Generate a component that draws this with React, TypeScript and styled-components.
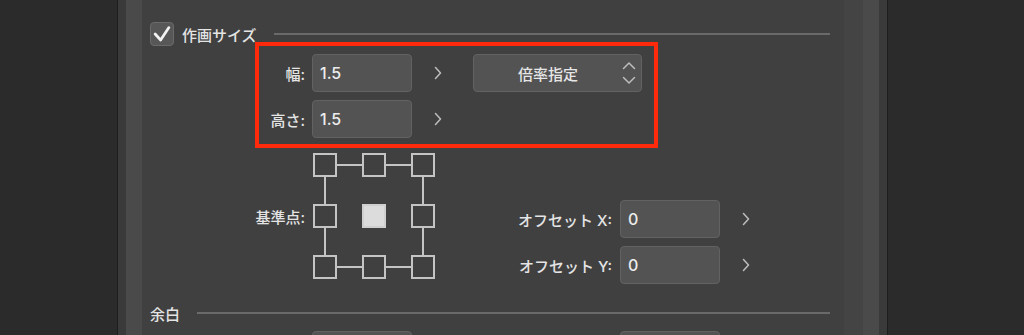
import * as React from 'react'
import styled, { createGlobalStyle } from 'styled-components'

interface ILabelProps {
	$w: number
	$gap?: number
}

interface IHeaderProps {
	$top: number
}

const GlobalStyle = createGlobalStyle`
	html, body {
		margin: 0;
		padding: 0;
		background: #2b2b2b;
	}
	body {
		font-family: "Inter", "Noto Sans CJK JP", sans-serif;
	}
`

const Screen = styled.div`
	display: flex;
	height: 335px;
	overflow: hidden;
	background: #2b2b2b;
`

const Backdrop = styled.div`
	width: 117px;
	flex: none;
`

const Frame = styled.div`
	display: flex;
	flex: none;
	width: 771px;
	box-sizing: border-box;
	border-left: 1px solid #1d1d1d;
	border-right: 1px solid #1d1d1d;
	padding: 0 8px;
	background: #3a3a3a;
`

const Rail = styled.div`
	width: 16px;
	flex: none;
	background: #4a4a4a;
`

const Gutter = styled.div`
	width: 19px;
	flex: none;
	background: #444444;
`

const Panel = styled.div`
	flex: 1;
	min-width: 0;
	background: #404040;
	padding: 0 14px 0 8px;
	color: #e4e4e4;
	font-size: 15px;
	font-weight: 500;
`

const SectionHeader = styled.div`
	display: flex;
	align-items: center;
	height: 24px;
	margin-top: ${(p: IHeaderProps) => p.$top}px;
`

const CheckBox = styled.span`
	display: flex;
	align-items: center;
	justify-content: center;
	width: 24px;
	height: 24px;
	box-sizing: border-box;
	border: 1px solid #6a6a6a;
	border-radius: 4px;
	background: #575757;
	margin-right: 8px;
`

const SectionTitle = styled.span`
	white-space: nowrap;
`

const Rule = styled.div`
	flex: 1;
	height: 2px;
	margin-left: 17px;
	background: #6a6a6a;
`

const Highlight = styled.div`
	display: grid;
	gap: 8px;
	width: 403px;
	box-sizing: border-box;
	margin: -4px 0 0 105px;
	padding: 8px 0 6px;
	border: 4px solid #ff2a0c;
`

const FieldRow = styled.div`
	display: flex;
	align-items: center;
	height: 38px;
`

const FieldLabel = styled.span`
	flex: none;
	width: ${(p: ILabelProps) => p.$w}px;
	margin-right: ${(p: ILabelProps) => p.$gap ?? 7}px;
	text-align: right;
	white-space: nowrap;
`

const NumberField = styled.input`
	flex: none;
	width: 100px;
	height: 38px;
	box-sizing: border-box;
	margin: 0;
	padding: 0 7px;
	border: 1px solid #626262;
	border-radius: 4px;
	background: #535353;
	color: #ececec;
	font-family: inherit;
	font-size: 16px;
	font-weight: 500;
	outline: none;
`

const StepCell = styled.span`
	display: flex;
	align-items: center;
	flex: none;
	width: 61px;
	height: 38px;
	box-sizing: border-box;
	padding-left: 22px;
`

const Select = styled.div`
	display: flex;
	align-items: center;
	width: 169px;
	height: 38px;
	box-sizing: border-box;
	padding-right: 5px;
	border: 1px solid #626262;
	border-radius: 4px;
	background: #535353;
	color: #e6e6e6;
`

const SelectText = styled.span`
	flex: 1;
	text-align: center;
`

const AnchorRow = styled.div`
	display: flex;
	align-items: flex-start;
	margin-top: 5px;
`

const AnchorBlock = styled.div`
	display: flex;
	align-items: center;
`

const Offsets = styled.div`
	display: grid;
	gap: 8px;
	margin-left: 65px;
	padding-top: 47px;
`

const Chevron = () => (
	<svg width="8" height="14" viewBox="0 0 8 14">
		<path d="M1.5 1.5 L6.5 7 L1.5 12.5" fill="none" stroke="#bdbdbd" strokeWidth="1.5" strokeLinecap="round" strokeLinejoin="round" />
	</svg>
)

const UpDown = () => (
	<svg width="14" height="24" viewBox="0 0 14 24">
		<path d="M1.5 7.5 L7 2 L12.5 7.5" fill="none" stroke="#bdbdbd" strokeWidth="1.5" strokeLinecap="round" strokeLinejoin="round" />
		<path d="M1.5 16.5 L7 22 L12.5 16.5" fill="none" stroke="#bdbdbd" strokeWidth="1.5" strokeLinecap="round" strokeLinejoin="round" />
	</svg>
)

const Check = () => (
	<svg width="24" height="24" viewBox="0 0 24 24">
		<path d="M4.5 12 L10.5 18.5 L19.5 5" fill="none" stroke="#f2f2f2" strokeWidth="3" strokeLinecap="round" strokeLinejoin="round" />
	</svg>
)

// 3x3 anchor picker, centre selected
const AnchorGrid = () => {
	const cols = [0, 49, 98]
	const rows = [0, 51, 102]
	const line = '#c4c4c4'

	return (
		<svg width="122" height="126" viewBox="0 0 122 126">
			<g stroke={line} strokeWidth="2">
				<line x1="24" y1="12" x2="49" y2="12" />
				<line x1="73" y1="12" x2="98" y2="12" />
				<line x1="24" y1="114" x2="49" y2="114" />
				<line x1="73" y1="114" x2="98" y2="114" />
				<line x1="12" y1="24" x2="12" y2="51" />
				<line x1="12" y1="75" x2="12" y2="102" />
				<line x1="110" y1="24" x2="110" y2="51" />
				<line x1="110" y1="75" x2="110" y2="102" />
			</g>
			{rows.map((y, r) =>
				cols.map((x, c) => {
					const on = r === 1 && c === 1
					return (
						<rect
							key={`${r}-${c}`}
							x={x + 1}
							y={y + 1}
							width="22"
							height="22"
							fill={on ? '#dcdcdc' : 'none'}
							stroke={on ? '#d0d0d0' : line}
							strokeWidth="2"
						/>
					)
				})
			)}
		</svg>
	)
}

export default function App() {
	return (
		<>
			<GlobalStyle />
			<Screen>
				<Backdrop />
				<Frame>
					<Rail />
					<Panel>
						<SectionHeader $top={22}>
							<CheckBox>
								<Check />
							</CheckBox>
							<SectionTitle>作画サイズ</SectionTitle>
							<Rule />
						</SectionHeader>

						<Highlight>
							<FieldRow>
								<FieldLabel $w={46}>幅:</FieldLabel>
								<NumberField defaultValue="1.5" />
								<StepCell>
									<Chevron />
								</StepCell>
								<Select>
									<SelectText>倍率指定</SelectText>
									<UpDown />
								</Select>
							</FieldRow>
							<FieldRow>
								<FieldLabel $w={46}>高さ:</FieldLabel>
								<NumberField defaultValue="1.5" />
								<StepCell>
									<Chevron />
								</StepCell>
							</FieldRow>
						</Highlight>

						<AnchorRow>
							<AnchorBlock>
								<FieldLabel $w={155} $gap={8}>基準点:</FieldLabel>
								<AnchorGrid />
							</AnchorBlock>
							<Offsets>
								<FieldRow>
									<FieldLabel $w={112} $gap={8}>オフセット X:</FieldLabel>
									<NumberField defaultValue="0" />
									<StepCell>
										<Chevron />
									</StepCell>
								</FieldRow>
								<FieldRow>
									<FieldLabel $w={112} $gap={8}>オフセット Y:</FieldLabel>
									<NumberField defaultValue="0" />
									<StepCell>
										<Chevron />
									</StepCell>
								</FieldRow>
							</Offsets>
						</AnchorRow>

						<SectionHeader $top={17}>
							<SectionTitle>余白</SectionTitle>
							<Rule />
						</SectionHeader>

						<FieldRow style={{ marginTop: 6 }}>
							<FieldLabel $w={155} />
							<NumberField defaultValue="0" />
							<StepCell />
							<FieldLabel $w={139} $gap={8} />
							<NumberField defaultValue="0" />
						</FieldRow>
					</Panel>
					<Gutter />
					<Rail />
				</Frame>
			</Screen>
		</>
	)
}
